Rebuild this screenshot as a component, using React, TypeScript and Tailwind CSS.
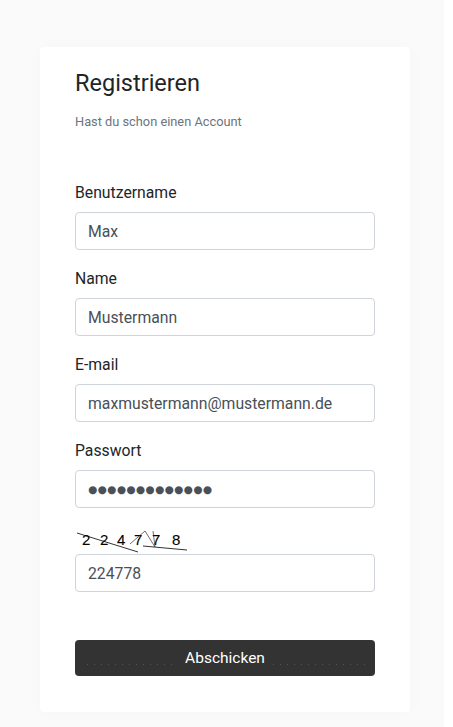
const fields = [
  { label: "Benutzername", value: "Max", password: false },
  { label: "Name", value: "Mustermann", password: false },
  { label: "E-mail", value: "maxmustermann@mustermann.de", password: false },
  { label: "Passwort", value: "●●●●●●●●●●●●●", password: true },
];

const inputClass =
  "block h-[38px] w-full rounded border border-[#ced4da] bg-white px-3 text-[#495057]";

const dotsClass =
  "absolute top-[24px] h-px bg-[repeating-linear-gradient(90deg,#555555_0,#555555_1px,transparent_1px,transparent_7px)]";

function Captcha() {
  return (
    <svg width="125" height="26" viewBox="0 0 125 26" className="block">
      <text
        x="7 25 42 59 77 97"
        y="16.5"
        fontFamily="Liberation Sans, sans-serif"
        fontSize="15"
        fill="#000"
        stroke="#000"
        strokeWidth="0.1"
      >
        224778
      </text>
      <path d="M2 5 L63 24" stroke="#000" strokeWidth="0.8" fill="none" />
      <path d="M55 16 L70 3 L80 19 L78 3" stroke="#333" strokeWidth="0.7" fill="none" />
      <path d="M68 18 L112 22" stroke="#000" strokeWidth="0.8" fill="none" />
    </svg>
  );
}

export default function App() {
  return (
    <div className="flex min-h-[727px] w-[444px] items-start bg-[#fafafa] pt-[47px] pl-[40px] font-['Roboto',sans-serif]">
      <div className="w-[370px] rounded bg-white px-[35px] pt-[21px] pb-[36px] shadow-[0_0_20px_rgba(0,0,0,0.02)]">
        <h1 className="text-[23.5px] leading-[30px] font-normal text-[#212529]">Registrieren</h1>
        <p className="mt-[14px] text-[12.8px] leading-[19px] text-[#6c757d]">Hast du schon einen Account</p>

        <form className="mt-[49px]">
          {fields.map((field) => (
            <div key={field.label} className="mb-[16px]">
              <label className="mb-[6px] block text-[15.75px] leading-[26px] text-[#212529]">{field.label}</label>
              <input
                type="text"
                readOnly
                value={field.value}
                className={
                  field.password
                    ? inputClass + " font-['DejaVu_Sans'] text-[10.5px] tracking-[0.4px]"
                    : inputClass + " text-[15.75px]"
                }
              />
            </div>
          ))}
          <div className="mt-[20px]">
            <Captcha />
            <input type="text" readOnly value="224778" className={inputClass + " text-[15.75px]"} />
          </div>
          <button
            type="button"
            className="relative mt-[48px] block h-[36px] w-full rounded bg-[#333333] pt-px text-[15.5px] text-white"
          >
            <span className={dotsClass + " left-[12px] w-[90px]"}></span>
            Abschicken
            <span className={dotsClass + " left-[198px] w-[92px]"}></span>
          </button>
        </form>
      </div>
    </div>
  );
}
